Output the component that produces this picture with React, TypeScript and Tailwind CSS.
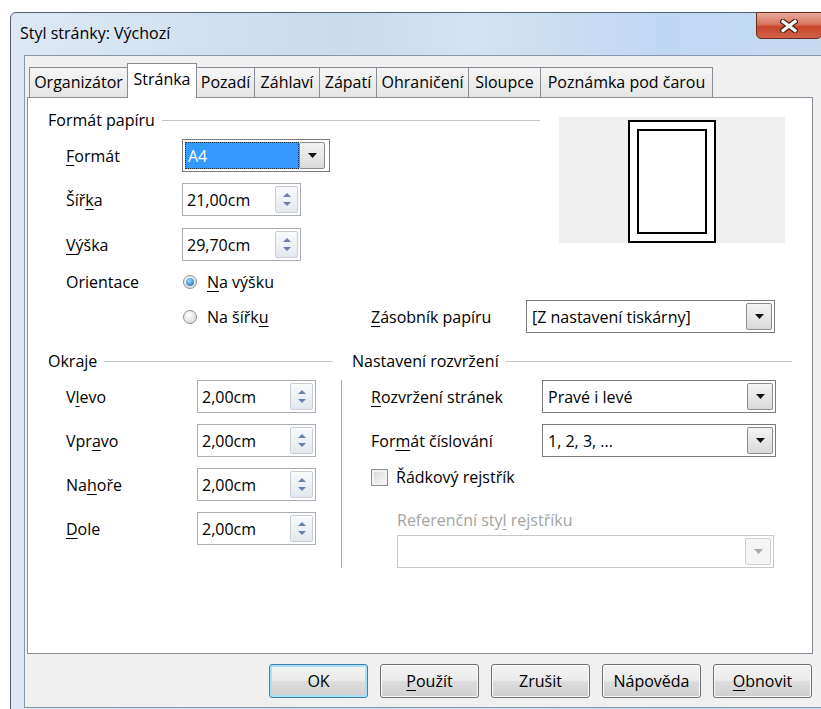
import React from 'react';

type Kids = { children: React.ReactNode };

// mnemonic letter (Alt+key hint)
const Mn = ({ children }: Kids) => (
  <span className="underline underline-offset-[3px] decoration-1">{children}</span>
);

const DownArrow = ({ dim }: { dim?: boolean }) => (
  <svg width="9" height="5" viewBox="0 0 9 5">
    <path d="M0 0h9L4.5 5z" fill={dim ? '#a9a9a9' : '#111'} />
  </svg>
);

const DropButton = ({ dim }: { dim?: boolean }) => (
  <div
    className={`w-[26px] h-[27px] mr-[2px] shrink-0 flex items-center justify-center border rounded-[2px] ${
      dim ? 'border-[#cfcfcf] bg-[#f5f5f5]' : 'border-[#8b8b8b] bg-[linear-gradient(#f4f4f4,#dadada)]'
    }`}
  >
    <DownArrow dim={dim} />
  </div>
);

const Combo = ({ value, width, dim }: { value?: string; width: string; dim?: boolean }) => (
  <div
    className={`${width} h-[33px] flex items-center border bg-white ${dim ? 'border-[#c8c8c8]' : 'border-[#7a7a7a]'}`}
  >
    <span className="flex-1 pl-[5px] whitespace-nowrap">{value}</span>
    <DropButton dim={dim} />
  </div>
);

const Spin = ({ value, width }: { value: string; width: string }) => (
  <div className={`${width} h-[33px] flex items-center border border-[#abadb3] bg-white`}>
    <span className="flex-1 pl-[4px]">{value}</span>
    <div className="w-[23px] h-[27px] mr-[2px] border border-[#c8cdd6] rounded-[2px] bg-[linear-gradient(#f8fafc,#e4e8ee)] flex flex-col items-center justify-center gap-[5px]">
      <svg width="8" height="4" viewBox="0 0 8 4">
        <path d="M0 4h8L4 0z" fill="#6a7fab" />
      </svg>
      <svg width="8" height="4" viewBox="0 0 8 4">
        <path d="M0 0h8L4 4z" fill="#6a7fab" />
      </svg>
    </div>
  </div>
);

const Radio = ({ checked }: { checked?: boolean }) => (
  <span className="w-[14px] h-[14px] shrink-0 rounded-full border border-[#8e8f8f] bg-[radial-gradient(circle_at_40%_35%,#ffffff,#d2d2d2)] flex items-center justify-center">
    {checked && (
      <span className="w-[8px] h-[8px] rounded-full bg-[radial-gradient(circle_at_40%_35%,#9ad8ff,#1667ad)]" />
    )}
  </span>
);

const GroupTitle = ({ children }: Kids) => (
  <div className="h-[20px] flex items-center">
    <span className="whitespace-nowrap">{children}</span>
    <span className="flex-1 h-px ml-[7px] bg-[#c4c4c4]" />
  </div>
);

const Btn = ({ children, primary }: Kids & { primary?: boolean }) => (
  <div
    className={`w-[99px] h-[34px] rounded-[3px] border flex items-center justify-center bg-[linear-gradient(#f3f3f3_0%,#ebebeb_48%,#dddddd_52%,#cfcfcf_100%)] ${
      primary ? 'border-[#3c7fb1] shadow-[inset_0_0_0_2px_#a9e0f6]' : 'border-[#707070] shadow-[inset_0_0_0_1px_#fbfbfb]'
    }`}
  >
    {children}
  </div>
);

const tabs: { label: string; w: string; active?: boolean }[] = [
  { label: 'Organizátor', w: 'w-[99px]' },
  { label: 'Stránka', w: 'w-[70px]', active: true },
  { label: 'Pozadí', w: 'w-[59px]' },
  { label: 'Záhlaví', w: 'w-[66px]' },
  { label: 'Zápatí', w: 'w-[58px]' },
  { label: 'Ohraničení', w: 'w-[93px]' },
  { label: 'Sloupce', w: 'w-[73px]' },
  { label: 'Poznámka pod čarou', w: 'w-[173px]' },
];

const margins: [React.ReactNode, string][] = [
  [<>V<Mn>l</Mn>evo</>, '2,00cm'],
  [<>Vpr<Mn>a</Mn>vo</>, '2,00cm'],
  [<>Na<Mn>h</Mn>oře</>, '2,00cm'],
  [<><Mn>D</Mn>ole</>, '2,00cm'],
];

export default function App() {
  return (
    <div className="w-[821px] h-[709px] overflow-hidden bg-white pt-[12px] pl-[10px] text-[16px] text-black font-['Open_Sans','Noto_Sans',sans-serif]">
      {/* window frame */}
      <div className="w-[840px] h-[712px] rounded-t-[6px] border border-[#52606f] bg-[linear-gradient(90deg,#dde8f4_0%,#d2e1f1_22%,#c9dbef_40%,#d3e3f3_55%,#bfd8f2_78%,#c6dbf0_100%)] flex flex-col">
        <div className="h-[42px] flex items-start shrink-0">
          <div className="w-[745px] h-[40px] flex items-center pl-[9px] whitespace-nowrap">Styl stránky: Výchozí</div>
          <div className="w-[66px] h-[27px] -mt-px rounded-b-[5px] border border-[#6a2b1f] bg-[linear-gradient(#e9ac9c_0%,#d8735e_45%,#c5432a_55%,#d2634a_100%)] flex items-center justify-center">
            <svg width="18" height="14" viewBox="0 0 18 14">
              <path d="M3 2.5l12 9M15 2.5l-12 9" stroke="#4a2018" strokeWidth="5.5" strokeLinecap="square" />
              <path d="M3 2.5l12 9M15 2.5l-12 9" stroke="#fff" strokeWidth="3.2" strokeLinecap="square" />
            </svg>
          </div>
        </div>

        {/* client area */}
        <div className="ml-[13px] h-[653px] shrink-0 bg-[#f0f0f0] border-l border-t border-b border-[#8796a8] pl-[2px] pt-[7px]">
          <div className="h-[34px] flex items-end pl-[2px]">
            {tabs.map((t, i) => (
              <div
                key={t.label}
                className={`${t.w} shrink-0 flex justify-center whitespace-nowrap border-t border-l border-r border-[#898c95] ${
                  i > 0 ? '-ml-px' : ''
                } ${
                  t.active
                    ? 'relative z-10 h-[35px] -mb-px bg-white pt-[3px]'
                    : 'h-[30px] bg-[linear-gradient(#f5f5f5,#e5e5e5)] pt-[2px]'
                }`}
              >
                {t.label}
              </div>
            ))}
          </div>

          {/* tab page */}
          <div className="w-[786px] h-[557px] border border-[#898c95] bg-white pl-[20px] flex flex-col">
            <div className="flex">
              <div className="w-[492px] flex flex-col">
                <div className="mt-[12px]">
                  <GroupTitle>Formát papíru</GroupTitle>
                </div>
                <div className="mt-[9px] h-[33px] flex items-center pl-[18px]">
                  <span className="w-[116px]"><Mn>F</Mn>ormát</span>
                  <div className="w-[148px] h-[33px] flex items-center border border-[#7a7a7a] bg-white p-[2px]">
                    <div className="flex-1 h-full flex items-center pl-[2px] bg-[#3399ff] text-white border border-dotted border-[#1d2a3a]">
                      A4
                    </div>
                    <DropButton />
                  </div>
                </div>
                <div className="mt-[11px] h-[33px] flex items-center pl-[18px]">
                  <span className="w-[116px]">Šíř<Mn>k</Mn>a</span>
                  <Spin value="21,00cm" width="w-[119px]" />
                </div>
                <div className="mt-[12px] h-[33px] flex items-center pl-[18px]">
                  <span className="w-[116px]"><Mn>V</Mn>ýška</span>
                  <Spin value="29,70cm" width="w-[119px]" />
                </div>
                <div className="mt-[9px] h-[24px] flex items-center pl-[18px]">
                  <span className="w-[117px]">Orientace</span>
                  <Radio checked />
                  <span className="ml-[10px]"><Mn>N</Mn>a výšku</span>
                </div>
              </div>

              {/* page preview */}
              <div className="ml-[19px] mt-[19px] w-[226px] h-[126px] bg-[#efefef] flex justify-center pt-[3px]">
                <svg width="88" height="123" viewBox="0 0 88 123">
                  <rect x="1" y="1" width="86" height="121" fill="#fff" stroke="#000" strokeWidth="2" />
                  <rect x="10" y="10" width="68" height="103" fill="#fff" stroke="#000" strokeWidth="2" />
                </svg>
              </div>
            </div>

            <div className="mt-[6px] h-[33px] flex items-center">
              <div className="w-[323px] flex items-center pl-[135px]">
                <Radio />
                <span className="ml-[10px]">Na šířk<Mn>u</Mn></span>
              </div>
              <span className="w-[155px]"><Mn>Z</Mn>ásobník papíru</span>
              <Combo value="[Z nastavení tiskárny]" width="w-[249px]" />
            </div>

            <div className="mt-[18px] flex items-start">
              <div className="w-[285px] flex flex-col">
                <GroupTitle>Okraje</GroupTitle>
                <div className="mt-[9px] flex flex-col gap-[11px]">
                  {margins.map(([label, value], i) => (
                    <div key={i} className="h-[33px] flex items-center pl-[18px]">
                      <span className="w-[131px]">{label}</span>
                      <Spin value={value} width="w-[119px]" />
                    </div>
                  ))}
                </div>
              </div>

              <div className="ml-[8px] w-[451px] flex flex-col">
                <div className="pl-[11px]">
                  <GroupTitle>Nastavení rozvržení</GroupTitle>
                </div>
                <div className="mt-[9px] border-l border-[#a8a8a8] pl-[29px] flex flex-col">
                  <div className="h-[33px] flex items-center">
                    <span className="w-[171px] whitespace-nowrap"><Mn>R</Mn>ozvržení stránek</span>
                    <Combo value="Pravé i levé" width="w-[234px]" />
                  </div>
                  <div className="mt-[11px] h-[33px] flex items-center">
                    <span className="w-[171px] whitespace-nowrap">For<Mn>m</Mn>át číslování</span>
                    <Combo value="1, 2, 3, ..." width="w-[234px]" />
                  </div>
                  <div className="mt-[10px] h-[20px] flex items-center">
                    <span className="w-[17px] h-[17px] border border-[#8e8f8f] bg-[linear-gradient(135deg,#d6d6d6,#fafafa)] shadow-[inset_0_0_0_2px_#f2f2f2]" />
                    <span className="ml-[8px]">Řádkový rejstřík</span>
                  </div>
                  <div className="mt-[23px] h-[20px] flex items-center pl-[26px] text-[#a3a3a3]">
                    Referenční sty<Mn>l</Mn>&nbsp;rejstříku
                  </div>
                  <div className="mt-[5px] pl-[26px]">
                    <Combo width="w-[377px]" dim />
                  </div>
                </div>
              </div>
            </div>
          </div>

          <div className="mt-[10px] ml-[242px] flex gap-[12px]">
            <Btn primary>OK</Btn>
            <Btn><Mn>P</Mn>oužít</Btn>
            <Btn>Zrušit</Btn>
            <Btn>Nápověda</Btn>
            <Btn><Mn>O</Mn>bnovit</Btn>
          </div>
        </div>
      </div>
    </div>
  );
}
